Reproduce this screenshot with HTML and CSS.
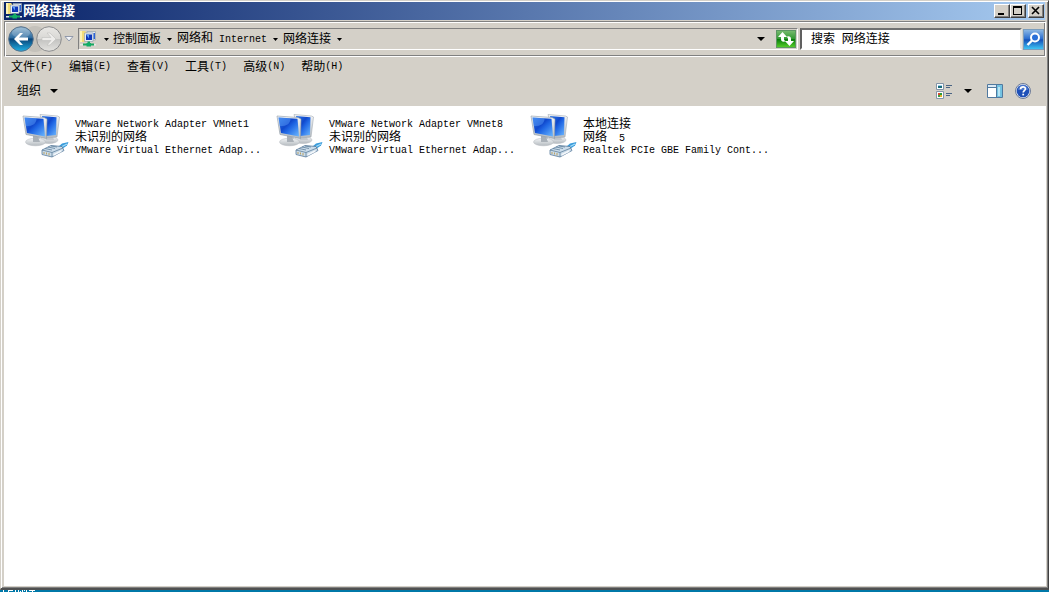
FILE: index.html
```
<!DOCTYPE html>
<html lang="zh-CN">
<head>
<meta charset="utf-8">
<title>网络连接</title>
<link rel="stylesheet" href="styles.css">
</head>
<body>
<svg class="defs" aria-hidden="true">
  <defs>
    <linearGradient id="screen" x1="0" y1="0" x2="1" y2="1">
      <stop offset="0" stop-color="#2f7ae8"/><stop offset=".4" stop-color="#1048cc"/><stop offset=".55" stop-color="#1f66e4"/><stop offset="1" stop-color="#6cb8ff"/>
    </linearGradient>
    <linearGradient id="metal" x1="0" y1="0" x2="0" y2="1">
      <stop offset="0" stop-color="#f4f6f8"/><stop offset="1" stop-color="#b4babf"/>
    </linearGradient>
    <linearGradient id="blueTop" x1="0" y1="0" x2="0" y2="1">
      <stop offset="0" stop-color="#8fb4cf"/><stop offset=".45" stop-color="#2c6ba0"/><stop offset=".5" stop-color="#0a4478"/><stop offset="1" stop-color="#1fb0e4"/>
    </linearGradient>
    <linearGradient id="greyTop" x1="0" y1="0" x2="0" y2="1">
      <stop offset="0" stop-color="#e9e8e5"/><stop offset=".48" stop-color="#d9d8d5"/><stop offset=".52" stop-color="#c3c3c1"/><stop offset="1" stop-color="#e4e3e0"/>
    </linearGradient>
    <symbol id="net-small" viewBox="0 0 16 16">
      <path d="M0 0h5l1 1v10H0z" fill="#f3dc78"/><path d="M0 0h2v11H0z" fill="#fdf3b4"/>
      <path d="M7 .5h8.500v8.500H7z" fill="#dfe6ee" stroke="#8a98a8" stroke-width=".6"/>
      <path d="M4.500 2h8.500v8.500H4.500z" fill="#e7edf4" stroke="#8a98a8" stroke-width=".6"/>
      <path d="M6 3.500h6v5.500H6z" fill="#1038b8"/><path d="M6 3.500h3v4z" fill="#5b9cf4"/><path d="M13.500 2h1.500v6h-1.500z" fill="#2d63d4"/>
      <path d="M7.500 10.500h2.500v2h4v2H3v-2h4.500z" fill="#16a860"/><path d="M6.500 12h4.500v3.500H6.500z" fill="#0fae68"/><path d="M0 13h3v1.500H0zM14 13h2v1.500h-2z" fill="#e4ece8"/>
    </symbol>
    <symbol id="net-large" viewBox="0 0 48 48">
      <ellipse cx="27" cy="27" rx="9" ry="3.500" fill="url(#metal)" stroke="#b4b9be" stroke-width=".5"/>
      <path d="M24 21h6l2 6h-8z" fill="#c3c8cd"/>
      <path d="M18 1.500l17.500 1.500 2 1-2.500 20-11 1z" fill="url(#metal)" stroke="#a3abb3" stroke-width=".6"/>
      <path d="M20 3l14.500 1.200L34 22l-10 1z" fill="url(#screen)"/>
      <path d="M11 22h6l2 7h-8z" fill="#b9bfc5"/>
      <ellipse cx="13.500" cy="29" rx="10" ry="3.800" fill="url(#metal)" stroke="#b4b9be" stroke-width=".5"/>
      <path d="M11 23l5 1 2 5h-7z" fill="#a9b0b7"/>
      <path d="M1 3l21 1.500 3 1.500-.500 19.500L4 21.500z" fill="url(#metal)" stroke="#8d98a5" stroke-width=".6"/>
      <path d="M2.500 4.500l19 1.300 1.500 17.700L5 20z" fill="url(#screen)"/>
      <path d="M2.500 4.500l12 .8c0 5-3 8-10.800 8z" fill="#67aaff" opacity=".4"/>
      <path d="M46.500 29l-6.500 1.500-4 3.500 4 2 5-3.500z" fill="#3b9cdb"/><path d="M45 31l-5 2.500" stroke="#a9def8" stroke-width="1.200"/>
      <path d="M20 37l9-4.500 11 1 2 4-12 6.500-10-2.500z" fill="#cbdcea" stroke="#597b9c" stroke-width=".8"/>
      <path d="M20 37l10 2.500V44M30 39.500l11-4.500M23 35.500l7 1.500M26 34l7 1.500M29 33l6 1" fill="none" stroke="#60809c" stroke-width=".8"/>
      <path d="M22 39v2M24.500 39.500v2M27 40v2.500" fill="none" stroke="#b99b58" stroke-width=".9"/>
      <path d="M31.500 41l8-4v2l-8 4z" fill="#fff" opacity=".8"/>
    </symbol>
  </defs>
</svg>

<div class="window">
  <header class="titlebar">
    <svg class="icon16"><use href="#net-small"/></svg>
    <h1 class="title">网络连接</h1>
    <button class="winbtn" aria-label="最小化"><svg width="12" height="10"><path d="M2 7h6v2H2z"/></svg></button>
    <button class="winbtn" aria-label="最大化"><svg width="12" height="10"><path fill-rule="evenodd" d="M1 0h9v9H1zM2 2v6h7V2z"/></svg></button>
    <button class="winbtn close" aria-label="关闭"><svg width="12" height="10"><path d="M2 1l7 7M9 1L2 8" fill="none" stroke="#000" stroke-width="1.600"/></svg></button>
  </header>

  <nav class="navbar">
    <div class="travel">
      <button class="round" aria-label="后退"><svg width="26" height="26" viewBox="0 0 26 26"><circle cx="13" cy="13" r="12.300" fill="url(#blueTop)" stroke="#587189"/><ellipse cx="13" cy="7" rx="9" ry="5" fill="#fff" opacity=".2"/><path d="M6 13l6-6h3l-4 4.500h9v3h-9l4 4.500h-3z" fill="#fff"/></svg></button>
      <button class="round" aria-label="前进"><svg width="26" height="26" viewBox="0 0 26 26"><circle cx="13" cy="13" r="12.300" fill="url(#greyTop)" stroke="#8b8c8d"/><path d="M20 13l-6-6h-3l4 4.500H6v3h9L11 19h3z" fill="#eeedeb" stroke="#b8b8b6" stroke-width=".5"/></svg></button>
      <button class="chevron" aria-label="最近的页面"><svg width="10" height="6"><path d="M1 .5h8L5 5z" fill="#f4f6fa" stroke="#7d89a0" stroke-width=".8"/></svg></button>
    </div>
    <div class="address">
      <svg class="icon16"><use href="#net-small"/></svg>
      <button class="arrow" aria-label="展开"><svg width="5" height="3"><path d="M0 0h5L2.500 3z"/></svg></button>
      <a class="crumb" href="#">控制面板</a>
      <button class="arrow" aria-label="展开"><svg width="5" height="3"><path d="M0 0h5L2.500 3z"/></svg></button>
      <a class="crumb" href="#">网络和<span class="en">&nbsp;Internet</span></a>
      <button class="arrow" aria-label="展开"><svg width="5" height="3"><path d="M0 0h5L2.500 3z"/></svg></button>
      <a class="crumb" href="#">网络连接</a>
      <button class="arrow" aria-label="展开"><svg width="5" height="3"><path d="M0 0h5L2.500 3z"/></svg></button>
      <button class="history" aria-label="以前的位置"><svg width="8" height="4"><path d="M0 0h8L4 4z"/></svg></button>
      <button class="refresh" aria-label="刷新"><svg width="18" height="18"><path d="M5.500 2l4.500 5H7v2c0 1.500 1 2 2 2-3 1.500-5 .5-5-2V7H1zM12.500 16L8 11h3V9c0-1.500-1-2-2-2 3-1.500 5-.5 5 2v2h3z" fill="#fff"/></svg></button>
    </div>
    <form class="search">
      <input class="search-box" type="text" placeholder="搜索&nbsp; 网络连接" aria-label="搜索 网络连接">
      <button class="search-btn" type="button" aria-label="搜索"><svg width="19" height="19"><circle cx="11" cy="7.500" r="4" fill="#2a70d8" stroke="#fff" stroke-width="2"/><path d="M8 10.500l-4.500 4.500" stroke="#fff" stroke-width="2.400"/></svg></button>
    </form>
  </nav>

  <div class="menubar">
    <button class="menu">文件<span class="en">(F)</span></button>
    <button class="menu">编辑<span class="en">(E)</span></button>
    <button class="menu">查看<span class="en">(V)</span></button>
    <button class="menu">工具<span class="en">(T)</span></button>
    <button class="menu">高级<span class="en">(N)</span></button>
    <button class="menu">帮助<span class="en">(H)</span></button>
  </div>

  <div class="toolbar">
    <button class="organize">组织<svg width="8" height="4"><path d="M0 0h8L4 4z"/></svg></button>
    <div class="tools">
      <button class="tool" aria-label="更改视图"><svg width="16" height="16"><path d="M.5.5h7v6h-7zM.5 8.500h7v7h-7z" fill="#fff" stroke="#8395a8"/><path d="M2 2h4v1H2z" fill="#9ed0ee"/><path d="M2 3h4v2H2z" fill="#176a78"/><path d="M2 10h2v2H2z" fill="#d54b30"/><path d="M4 10h2v2H4z" fill="#2a9a3a"/><path d="M2 12h2v2H2z" fill="#3ca048"/><path d="M4 12h2v2H4z" fill="#e0b32c"/><path d="M10 2.500h6M10 4.500h4M10 10.500h6M10 12.500h4" stroke="#4a6484"/></svg></button>
      <button class="tool" aria-label="更多选项"><svg width="8" height="4"><path d="M0 0h8L4 4z"/></svg></button>
      <button class="tool pane" aria-label="预览窗格"><svg width="16" height="14"><path d="M.5.5h15v13H.5z" fill="#fff" stroke="#50799f"/><path d="M1 1h14v2H1z" fill="#dbe9f4"/><path d="M10 1h5v12h-5z" fill="#74c3e2"/><path d="M1 3.500h9M9.500 1v12" stroke="#50799f"/><path d="M11 3h2v9h-2z" fill="#b7e4f4"/></svg></button>
      <button class="tool" aria-label="帮助"><svg width="16" height="16"><circle cx="8" cy="8" r="7.500" fill="#dbe2ef" stroke="#6e7c98"/><circle cx="8" cy="8" r="6.300" fill="#1e50b8"/><path d="M3 7a5 5 0 0 1 10 0z" fill="#668edb" opacity=".6"/><path d="M5.500 6.300C5.600 3 10.600 3.200 10.400 6c-.1 1.600-2.200 1.700-2.200 3.500" fill="none" stroke="#fff" stroke-width="1.700"/><path d="M7.300 10.700h1.800v1.700H7.300z" fill="#fff"/></svg></button>
    </div>
  </div>

  <main class="content">
    <article class="item">
      <svg class="icon48"><use href="#net-large"/></svg>
      <div class="lines">
        <p class="line en">VMware Network Adapter VMnet1</p>
        <p class="line">未识别的网络</p>
        <p class="line en">VMware Virtual Ethernet Adap...</p>
      </div>
    </article>
    <article class="item">
      <svg class="icon48"><use href="#net-large"/></svg>
      <div class="lines">
        <p class="line en">VMware Network Adapter VMnet8</p>
        <p class="line">未识别的网络</p>
        <p class="line en">VMware Virtual Ethernet Adap...</p>
      </div>
    </article>
    <article class="item">
      <svg class="icon48"><use href="#net-large"/></svg>
      <div class="lines">
        <p class="line">本地连接</p>
        <p class="line">网络<span class="en">&nbsp;&nbsp;5</span></p>
        <p class="line en">Realtek PCIe GBE Family Cont...</p>
      </div>
    </article>
  </main>
</div>
<footer class="desktop"><svg width="40" height="2"><path d="M3 0h1v2H3zM8 0h5v1H8zM8 1h1v1H8zM15 0h1v2h-1zM18 0h1v2h-1zM20 1h1v1h-1zM22 0h1v2h-1zM24 0h1v1h-1zM26 0h1v2h-1zM29 0h6v1h-6zM32 1h1v1h-1z" fill="#fff"/></svg></footer>
</body>
</html>
```
FILE: styles.css
```
* { box-sizing: border-box; }

body {
  margin: 0;
  height: 100vh;
  display: flex;
  flex-direction: column;
  background: #0078a8;
  color: #000;
  font: 12px/14px "Liberation Sans", "Noto Sans CJK SC", sans-serif;
}

.defs { position: absolute; width: 0; height: 0; }

button {
  display: flex;
  align-items: center;
  justify-content: center;
  padding: 0;
  border: 0;
  background: none;
  color: inherit;
  font: inherit;
}

svg { display: block; flex: none; }
.en { font-family: "Liberation Mono", monospace; font-size: 10px; }
.icon16 { width: 16px; height: 16px; }
.icon48 { width: 48px; height: 48px; }

.window {
  flex: 1;
  min-height: 0;
  display: flex;
  flex-direction: column;
  padding: 1px 1px 2px 2px;
  background: #d4d0c8;
  border: 1px solid #d4d0c8;
  border-right-color: #404040;
  border-bottom: 2px solid #505050;
  box-shadow: inset 1px 1px #fff, inset -1px -1px #808080;
}

.titlebar {
  display: flex;
  align-items: center;
  height: 18px;
  margin: 0 2px 0 1px;
  padding: 0 1px 0 2px;
  background: linear-gradient(to right, #0a246a, #a6caf0);
}
.title {
  flex: 1;
  margin: 0 0 0 1px;
  color: #fff;
  font-size: 13px;
  line-height: 18px;
  font-weight: bold;
}
.winbtn {
  width: 16px;
  height: 14px;
  background: #d4d0c8;
  border: 1px solid;
  border-color: #fff #404040 #404040 #fff;
  box-shadow: inset -1px -1px #808080;
}
.close { margin-left: 2px; }

.navbar {
  display: flex;
  align-items: center;
  height: 36px;
  margin: 1px 1px 0;
  padding: 0 1px 0 3px;
  border: 1px solid #808080;
  border-right-color: #fff;
  border-bottom-color: #fff;
  box-shadow: inset 1px 1px #fff, inset -1px -1px #808080;
}
.travel {
  display: flex;
  align-items: center;
  gap: 2px;
  width: 70px;
}
.round { width: 26px; height: 26px; border-radius: 13px; }
.round:first-child { box-shadow: 14px 0 0 #c4c1ba; }
.chevron { width: 10px; height: 26px; }

.address {
  flex: 1;
  display: flex;
  align-items: center;
  height: 22px;
  padding: 0 1px;
  border: 1px solid #808080;
  border-right-color: #fff;
  border-bottom-color: #fff;
}
.arrow { width: 16px; height: 20px; }
.icon16 + .arrow { width: 17px; padding-left: 3px; }
.crumb {
  color: inherit;
  text-decoration: none;
  line-height: 18px;
  white-space: nowrap;
}
.history { width: 16px; height: 20px; margin: 0 7px 0 auto; }
.refresh {
  width: 20px;
  height: 18px;
  background: linear-gradient(#75b96e, #329a32 48%, #087c0c 52%, #54cc28);
  border: 1px solid #5c9663;
}

.search {
  display: flex;
  align-items: center;
  gap: 1px;
  width: 244px;
  margin-left: 2px;
}
.search-box {
  flex: 1;
  min-width: 0;
  height: 22px;
  padding: 0 9px;
  background: #fff;
  border: 2px solid;
  border-color: #707070 #e8e6e0 #fff #606060;
  border-radius: 0;
  font: inherit;
}
.search-box::placeholder { color: #000; opacity: 1; }
.search-btn {
  width: 21px;
  height: 21px;
  background: linear-gradient(#8bb7e4, #2d6fd0 45%, #1450b8 52%, #3fc4f4);
  border: 1px solid #7b9dbd;
}

.menubar { display: flex; height: 19px; }
.menu { padding: 0 8px; }

.toolbar {
  display: flex;
  align-items: center;
  justify-content: space-between;
  height: 30px;
  padding: 0 16px 0 14px;
}
.organize { gap: 9px; }
.tools { display: flex; align-items: center; gap: 12px; }
.pane { margin: 0 0 0 3px; }

.content {
  flex: 1;
  min-height: 0;
  display: flex;
  flex-wrap: wrap;
  align-content: flex-start;
  margin: 0 1px;
  padding: 7px 18px;
  background: #fff;
}
.item { display: flex; gap: 5px; width: 254px; }
.lines { padding-top: 5px; white-space: nowrap; }
.line { margin: 0; height: 13px; line-height: 13px; }

.desktop { height: 2px; }
```
